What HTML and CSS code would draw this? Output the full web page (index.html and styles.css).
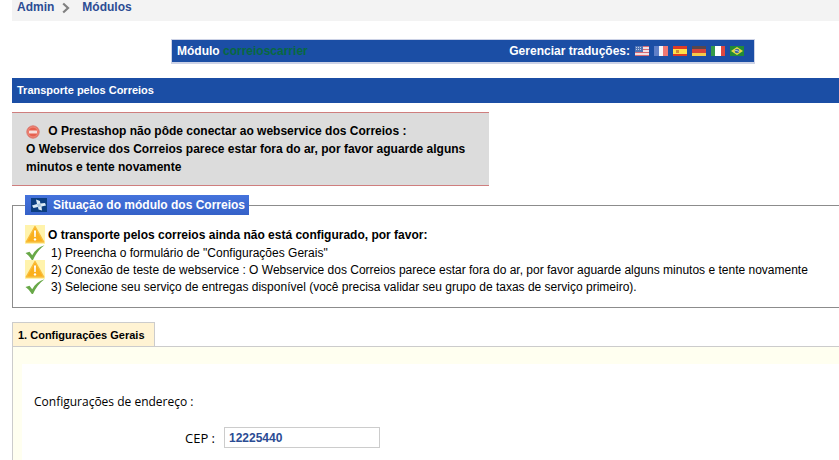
FILE: index.html
```
<!DOCTYPE html>
<html lang="pt-BR">
<head>
    <meta charset="UTF-8">
    <meta name="viewport" content="width=device-width, initial-scale=1.0">
    <title>Transporte pelos Correios</title>
    <link rel="stylesheet" href="styles.css">
</head>
<body>
    <svg class="defs" aria-hidden="true">
        <symbol id="warning" viewBox="0 0 20 19">
            <rect width="20" height="19" fill="#fff3ac"/>
            <path d="M10 1.5 L18.8 17 H1.2 Z" fill="#fbb01c" stroke="#f8bd3c" stroke-width="1.4" stroke-linejoin="round"/>
            <path d="M9 5.5 H11 L10.7 12 H9.3 Z" fill="#fff"/>
            <circle cx="10" cy="14.4" r="1.2" fill="#fff"/>
        </symbol>
        <symbol id="check" viewBox="0 0 20 16">
            <path d="M0.5 8 L4.5 6.8 L7.2 10.2 C10 5.5 14 2 19.5 0.3 C14.5 4 10.5 9 8 15 H6.8 C5 12 3 9.8 0.5 8 Z" fill="#68a848"/>
        </symbol>
    </svg>
    <nav class="crumbs">
        <a href="#">Admin</a>
        <svg class="arrow" viewBox="0 0 8 12"><path d="M1.2 1.5 L6 6 L1.2 10.5" fill="none" stroke="#808080" stroke-width="2.2"/></svg>
        <a href="#">Módulos</a>
    </nav>
    <div class="module">
        <div><b>Módulo</b> <span class="module-name">correioscarrier</span></div>
        <div class="langs">
            <b>Gerenciar traduções:</b>
            <a href="#" aria-label="English"><svg viewBox="0 0 14 10"><rect width="14" height="10" fill="#f0dfe2"/><path d="M0 .5H14M0 3.5H14M0 6.5H14M0 9.5H14" stroke="#d56a75"/><rect width="8" height="6" fill="#5275b5"/><path d="M1 1.5H7M1 3.5H7" stroke="#bccce8" stroke-dasharray="1 1"/></svg></a>
            <a href="#" aria-label="Français"><svg viewBox="0 0 14 10"><rect width="14" height="10" fill="#f4f4f8"/><rect width="5" height="10" fill="#5f7fc8"/><rect x="9" width="5" height="10" fill="#ef7773"/></svg></a>
            <a href="#" aria-label="Español"><svg viewBox="0 0 14 10"><rect width="14" height="10" fill="#dc3b24"/><rect y="3" width="14" height="5" fill="#ffe04a"/><rect x="3" y="4" width="3" height="3" fill="#d78933"/></svg></a>
            <a href="#" aria-label="Deutsch"><svg viewBox="0 0 14 10"><rect width="14" height="4" fill="#58474c"/><rect y="3" width="14" height="4" fill="#d84438"/><rect y="7" width="14" height="3" fill="#f4cb4a"/></svg></a>
            <a href="#" aria-label="Italiano"><svg viewBox="0 0 14 10"><rect width="14" height="10" fill="#fff"/><rect width="4" height="10" fill="#359b4a"/><rect x="10" width="4" height="10" fill="#df4740"/></svg></a>
            <a href="#" aria-label="Português"><svg viewBox="0 0 14 10"><rect width="14" height="10" fill="#238b38"/><path d="M7 1 L13 5 L7 9 L1 5 Z" fill="#e7dc43"/><circle cx="7" cy="5" r="2.3" fill="#41689c"/><path d="M5 4.4 Q7 4 9 5.6" stroke="#dce8ef" stroke-width=".7" fill="none"/></svg></a>
        </div>
    </div>
    <h2 class="title">Transporte pelos Correios</h2>
    <div class="error">
        <svg class="stop" viewBox="0 0 14 14"><circle cx="7" cy="7" r="6.2" fill="#e6604f" stroke="#d98078"/><circle cx="7" cy="7" r="5" fill="none" stroke="#f39b8c" stroke-width=".8"/><rect x="3" y="5.5" width="8" height="3" rx=".5" fill="#f6dedb"/></svg>
        O Prestashop não pôde conectar ao webservice dos Correios :<br>
        O Webservice dos Correios parece estar fora do ar, por favor aguarde alguns minutos e tente novamente
    </div>
    <fieldset class="status">
        <legend>
            <svg class="logo" viewBox="0 0 16 14"><rect width="16" height="14" fill="#0c3e80"/><path d="M5 1.5 L9 3 L9.3 5.5 L14 5 L15 7.5 L10.5 8.5 L11 12.5 L7.5 11.5 L7 9 L2.5 10 L1 7.5 L6 6 Z" fill="#dcebf6"/><path d="M6 6 L9.3 5.5 L10.5 8.5 L7 9 Z" fill="#a9c6e0"/></svg>
            Situação do módulo dos Correios
        </legend>
        <div class="need"><svg class="warn"><use href="#warning"/></svg>O transporte pelos correios ainda não está configurado, por favor:</div>
        <ul>
            <li><svg class="ok"><use href="#check"/></svg>1) Preencha o formulário de "Configurações Gerais"</li>
            <li><svg class="warn"><use href="#warning"/></svg>2) Conexão de teste de webservice : O Webservice dos Correios parece estar fora do ar, por favor aguarde alguns minutos e tente novamente</li>
            <li><svg class="ok"><use href="#check"/></svg>3) Selecione seu serviço de entregas disponível (você precisa validar seu grupo de taxas de serviço primeiro).</li>
        </ul>
    </fieldset>
    <button class="tab" type="button">1. Configurações Gerais</button>
    <div class="sheet">
        <form class="config">
            <h4>Configurações de endereço :</h4>
            <div class="field">
                <label for="cep">CEP :</label>
                <input type="text" id="cep" value="12225440">
            </div>
        </form>
    </div>
</body>
</html>
```
FILE: styles.css
```
*{
    margin: 0;
    padding: 0;
    box-sizing: border-box;
}

body{
    padding-left: 12px;
    background: #fff;
    color: #000;
    font-family: "Liberation Sans", Arial, sans-serif;
    font-size: 12px;
    overflow: hidden;
}

svg{
    display: block;
    flex: none;
}

.defs{
    position: absolute;
    width: 0;
    height: 0;
}

.crumbs{
    display: flex;
    align-items: center;
    height: 21px;
    padding: 0 5px 7px;
    background: #f3f3f3;
}

.crumbs a{
    color: #2b4c94;
    font-weight: bold;
    text-decoration: none;
}

.arrow{
    width: 8px;
    height: 12px;
    margin: 2px 12px 0 8px;
}

.module{
    display: flex;
    align-items: center;
    justify-content: space-between;
    height: 25px;
    margin: 18px 84px 14px 159px;
    padding: 0 10px 0 5px;
    border: 1px solid #ccd2e6;
    border-bottom-width: 2px;
    background: #1b4ea5;
    color: #fff;
}

.module-name{
    color: #08693f;
    font-weight: bold;
}

.langs{
    display: flex;
    align-items: center;
    gap: 5px;
}

.langs a svg{
    width: 14px;
    height: 10px;
}

.title{
    height: 25px;
    padding-left: 5px;
    background: #1b4ea5;
    color: #fff;
    font-size: 11px;
    line-height: 25px;
}

.error{
    width: 477px;
    margin: 9px 0;
    padding: 9px 14px;
    border: solid #cf7e7e;
    border-width: 1px 0;
    background: #dcdcdc;
    font-weight: bold;
    line-height: 18px;
}

.stop{
    display: inline-block;
    width: 14px;
    height: 14px;
    margin-right: 5px;
    vertical-align: -4px;
}

.status{
    min-width: 0;
    padding: 10px 12px 12px;
    border: 1px solid #8c8c8c;
    border-right: 0;
}

.status legend{
    display: flex;
    align-items: center;
    gap: 6px;
    height: 20px;
    padding: 0 4px 0 6px;
    background: linear-gradient(#4573dc, #3561c8);
    color: #fff;
    font-weight: bold;
}

.logo{
    width: 16px;
    height: 14px;
}

.status ul{
    list-style: none;
}

.status li, .need{
    display: flex;
    align-items: center;
    gap: 6px;
    height: 17px;
    white-space: nowrap;
}

.need{
    gap: 3px;
    height: 19px;
    font-weight: bold;
}

.warn{
    width: 20px;
    height: 19px;
}

.ok{
    width: 20px;
    height: 16px;
}

.tab{
    display: block;
    position: relative;
    height: 25px;
    margin-top: 14px;
    padding: 0 9px 0 5px;
    border: 1px solid #ccc;
    border-bottom-color: #ccc;
    background: #fff3d3;
    color: #000;
    font-family: inherit;
    font-size: 11px;
    font-weight: bold;
}

.sheet{
    margin-top: -1px;
    padding: 17px 0 0 9px;
    border: 1px solid #ccc;
    border-width: 1px 0 0 1px;
    background: #fffff0;
}

.config{
    padding: 29px 12px 20px;
    background: #fff;
    font-family: "Open Sans", sans-serif;
}

.config h4{
    font-size: 12px;
    font-weight: 500;
    line-height: 18px;
}

.field{
    display: flex;
    align-items: center;
    margin-top: 16px;
}

.field label{
    width: 181px;
    margin-right: 9px;
    font-size: 13px;
    font-weight: 500;
    text-align: right;
}

.field input{
    width: 156px;
    height: 21px;
    padding: 0 4px;
    border: 1px solid #ccc;
    background: #fff;
    color: #2b4c94;
    font-family: "Liberation Sans", Arial, sans-serif;
    font-size: 12px;
    font-weight: bold;
}
```
